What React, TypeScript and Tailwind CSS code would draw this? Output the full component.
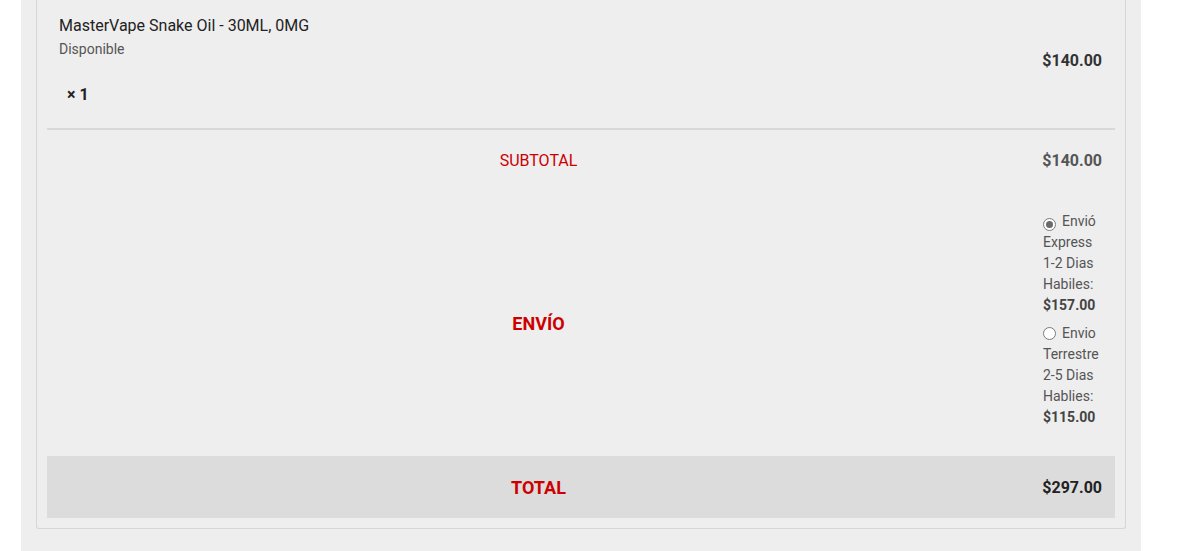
import React from 'react';

interface ShippingOption {
  label: string;
  price: string;
  checked?: boolean;
}

const shippingOptions: ShippingOption[] = [
  { label: 'Envió Express 1-2 Dias Habiles:', price: '$157.00', checked: true },
  { label: 'Envio Terrestre 2-5 Dias Hablies:', price: '$115.00' },
];

// Radio circle drawn by hand so the checked state stays grey
const Radio = ({ checked }: { checked?: boolean }) => (
  <span className="inline-flex items-center justify-center w-[13px] h-[13px] rounded-full border border-[#7a7a7a] bg-white align-[-2px] mr-[6px]">
    {checked && <span className="block w-[7px] h-[7px] rounded-full bg-[#6a6a6a]" />}
  </span>
);

export default function App() {
  return (
    <div className="min-h-[551px] bg-white font-['Roboto',sans-serif]">
      <div className="ml-[21px] w-[1120px] min-h-[551px] bg-[#eeeeee] px-[15px] pb-[22px]">
        <div className="border-x border-b border-[#d6d6d6] rounded-b-[3px] px-[10px] pb-[10px]">
          {/* product row */}
          <div className="flex h-[128px]">
            <div className="flex-1 pl-[12px] pt-[14px]">
              <div className="text-[16px] leading-[24px] text-[#222]">MasterVape Snake Oil - 30ML, 0MG</div>
              <div className="text-[14px] leading-[20px] text-[#555] mt-[1px]">Disponible</div>
              <div className="text-[16px] leading-[20px] font-bold text-[#222] pl-[8px] mt-[26px]">× 1</div>
            </div>
            <div className="w-[85px] pr-[13px] flex items-center justify-end pb-[6px]">
              <span className="text-[16px] font-bold text-[#333]">$140.00</span>
            </div>
          </div>

          <div className="h-[2px] bg-[#d8d8d8]" />

          {/* subtotal */}
          <div className="flex h-[60px] items-center pt-[2px]">
            <div className="flex-1 text-center text-[16px] text-[#cc0000]">SUBTOTAL</div>
            <div className="w-[85px] pr-[13px] text-right text-[16px] font-bold text-[#555]">$140.00</div>
          </div>

          {/* shipping */}
          <div className="flex h-[266px]">
            <div className="flex-1 flex items-center justify-center text-[18px] font-bold text-[#cc0000]">ENVÍO</div>
            <ul className="w-[85px] pl-[13px] pr-[12px] pt-[21px]">
              {shippingOptions.map((o) => (
                <li key={o.price} className="mb-[7px] text-[14px] leading-[21px] text-[#555]">
                  <Radio checked={o.checked} />
                  {o.label} <span className="font-bold text-[#444]">{o.price}</span>
                </li>
              ))}
            </ul>
          </div>

          {/* total */}
          <div className="flex h-[62px] items-center bg-[#dcdcdc] pt-[1px]">
            <div className="flex-1 text-center text-[18px] font-bold text-[#cc0000]">TOTAL</div>
            <div className="w-[85px] pr-[13px] text-right text-[16px] font-bold text-[#222]">$297.00</div>
          </div>
        </div>
      </div>
    </div>
  );
}
